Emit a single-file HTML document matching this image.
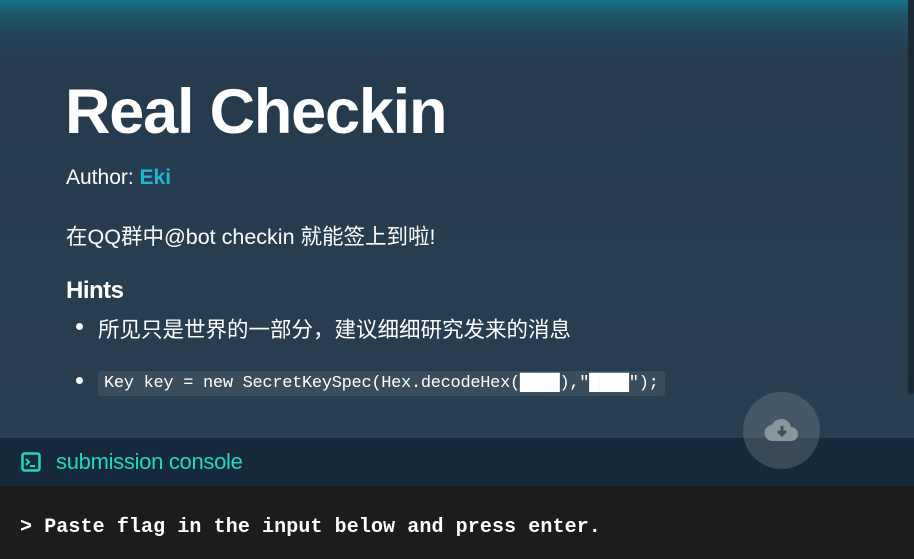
<!DOCTYPE html>
<html><head><meta charset="utf-8"><style>
*{margin:0;padding:0;box-sizing:border-box}
body{width:914px;height:559px;overflow:hidden;background:#263c4e;font-family:"Liberation Sans","Noto Sans CJK SC",sans-serif;color:#fff;position:relative}
.top{position:absolute;left:0;top:0;width:914px;height:60px;background:linear-gradient(#167289 0%,#1f5466 25%,#23445a 60%,#263c4e 100%)}
.main{position:absolute;left:0;top:60px;width:914px;height:378px;background:linear-gradient(#263c4e,#283f51)}
.sb{position:absolute;right:0;top:0;width:6px;height:395px;background:#1a2a36;border-radius:0 0 3px 3px}
h1{position:absolute;left:65px;top:76px;font-size:63px;font-weight:bold;letter-spacing:-1.2px}
.author{position:absolute;left:66px;top:166px;font-size:21px}
.author b{color:#1bb8d0}
.desc{position:absolute;left:66px;top:220px;font-size:21.5px}
.hints{position:absolute;left:66px;top:277px;font-size:24px;font-weight:bold;letter-spacing:-0.5px}
.li{position:absolute;left:98px;font-size:21.5px}
.dot{position:absolute;left:76px;width:7px;height:7px;border-radius:50%;background:#fff}
code{font-family:"Liberation Mono","Noto Sans CJK SC",monospace;font-size:17px;background:#3a4d5c;border-radius:3px;padding:3px 6px;display:inline-block;letter-spacing:-0.3px}
.fab{position:absolute;left:743px;top:392px;width:77px;height:77px;border-radius:50%;background:rgba(120,135,145,0.35)}
.con{position:absolute;left:0;top:438px;width:914px;height:48px;background:#16293a}
.con span{position:absolute;left:56px;top:11px;font-size:22px;color:#1fd8c0;letter-spacing:-0.3px}
.term{position:absolute;left:0;top:486px;width:914px;height:73px;background:#1c1c1e}
.term div{position:absolute;left:20px;top:30px;font-family:"Liberation Mono",monospace;font-weight:bold;font-size:20px;color:#fff;letter-spacing:0.1px}
</style></head><body>
<div class="top"></div><div class="main"></div><div class="sb"></div>
<h1>Real Checkin</h1>
<div class="author">Author: <b>Eki</b></div>
<div class="desc">在QQ群中@bot checkin 就能签上到啦!</div>
<div class="hints">Hints</div>
<div class="dot" style="top:323px"></div>
<div class="li" style="top:313px">所见只是世界的一部分，建议细细研究发来的消息</div>
<div class="dot" style="top:377px"></div>
<div class="li" style="top:368px;left:98px"><code>Key key = new SecretKeySpec(Hex.decodeHex(████),"████");</code></div>
<div class="con">
<svg style="position:absolute;left:21px;top:14px" width="20" height="20" viewBox="0 0 20 20"><rect x="1.5" y="1.5" width="17" height="17" rx="2" fill="none" stroke="#1fd8c0" stroke-width="2.5"/><path d="M5 7l3 3-3 3M9 14h5" fill="none" stroke="#1fd8c0" stroke-width="2"/></svg>
<span>submission console</span></div>
<div class="fab"><svg style="position:absolute;left:21px;top:26px" width="36" height="24" viewBox="0 0 36 24"><path d="M9 23a8 8 0 0 1-1-16 10 10 0 0 1 19 2 7 7 0 0 1 0 14z" fill="#8a969e"/><path d="M18 8v9M14 13l4 4 4-4" stroke="#3d4e5a" stroke-width="3" fill="none"/></svg></div>
<div class="term"><div>&gt; Paste flag in the input below and press enter.</div></div>
</body></html>
